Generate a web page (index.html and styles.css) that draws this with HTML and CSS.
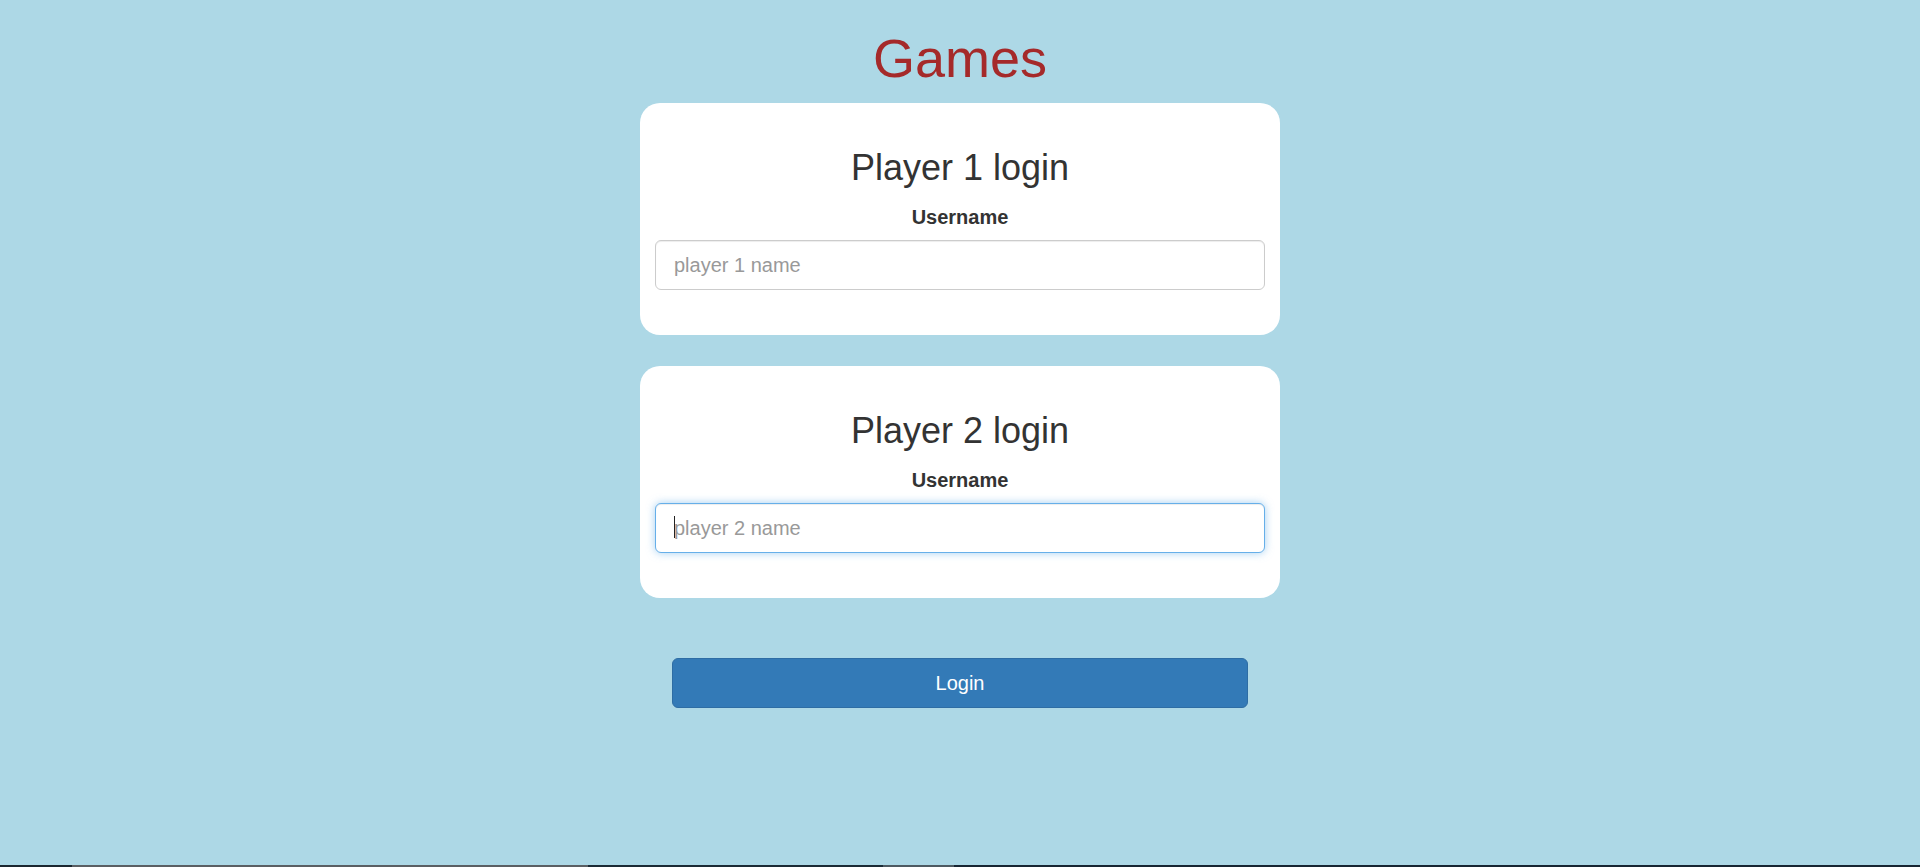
FILE: index.html
```html
<!DOCTYPE html>
<html lang="en">
<head>
<meta charset="utf-8">
<title>Games</title>
<link rel="stylesheet" href="styles.css">
</head>
<body>
<main class="page">
  <h1 class="title">Games</h1>
  <form class="login-form" onsubmit="return false;">
    <section class="card">
      <h2 class="card-heading">Player 1 login</h2>
      <label class="field-label" for="p1">Username</label>
      <div class="field">
        <input class="text-input" id="p1" type="text" placeholder="player 1 name">
      </div>
    </section>
    <section class="card card-second">
      <h2 class="card-heading">Player 2 login</h2>
      <label class="field-label" for="p2">Username</label>
      <div class="field field-focused">
        <input class="text-input text-input-focused" id="p2" type="text" placeholder="player 2 name">
      </div>
    </section>
    <button class="login-button" type="submit">Login</button>
  </form>
</main>
<div class="taskbar-strip"></div>
</body>
</html>
```

FILE: styles.css
```css
html, body {
  margin: 0;
  padding: 0;
  background: #add8e6;
}

body {
  min-height: 100vh;
  font-family: "Liberation Sans", Arial, Helvetica, sans-serif;
  color: #333333;
}

.page {
  display: flex;
  flex-direction: column;
  align-items: center;
  padding-top: 28px;
}

.title {
  margin: 0 0 15px 0;
  font-size: 54px;
  line-height: 60px;
  font-weight: 400;
  color: #a52a2a;
}

.login-form {
  width: 640px;
  display: flex;
  flex-direction: column;
  align-items: center;
}

.card {
  box-sizing: border-box;
  width: 640px;
  background: #ffffff;
  border-radius: 20px;
  padding: 45px 15px 45px 15px;
  display: flex;
  flex-direction: column;
  align-items: center;
}

.card-second {
  margin-top: 31px;
}

.card-heading {
  margin: 0 0 15px 0;
  font-size: 36px;
  line-height: 40px;
  font-weight: 400;
  color: #333333;
}

.field-label {
  display: block;
  margin: 0 0 9px 0;
  font-size: 20px;
  line-height: 28px;
  font-weight: 700;
  color: #333333;
}

.field {
  position: relative;
  width: 100%;
}

.text-input {
  box-sizing: border-box;
  display: block;
  width: 100%;
  height: 50px;
  margin: 0;
  padding: 0 18px;
  font-family: "Liberation Sans", Arial, Helvetica, sans-serif;
  font-size: 20px;
  color: #555555;
  background: #ffffff;
  border: 1px solid #cccccc;
  border-radius: 6px;
  box-shadow: inset 0 1px 1px rgba(0, 0, 0, 0.075);
  outline: none;
}

.text-input::placeholder {
  color: #999999;
  opacity: 1;
}

.text-input-focused {
  border-color: #66afe9;
  box-shadow: inset 0 1px 1px rgba(0, 0, 0, 0.075), 0 0 8px rgba(102, 175, 233, 0.6);
}

.field-focused::after {
  content: "";
  position: absolute;
  left: 19px;
  top: 13px;
  width: 1px;
  height: 22px;
  background: #222222;
}

.login-button {
  box-sizing: border-box;
  margin-top: 60px;
  width: 576px;
  height: 50px;
  font-family: "Liberation Sans", Arial, Helvetica, sans-serif;
  font-size: 20px;
  color: #ffffff;
  background: #337ab7;
  border: 1px solid #2e6da4;
  border-radius: 6px;
  cursor: pointer;
}

.taskbar-strip {
  position: fixed;
  left: 0;
  right: 0;
  bottom: 0;
  height: 2px;
  background: linear-gradient(to right,
    #1b2730 0, #1b2730 72px,
    #5a5f63 72px, #5a5f63 588px,
    #1b2b36 588px, #1b2b36 883px,
    #4d5a62 883px, #4d5a62 954px,
    #172633 954px, #172633 100%);
}
```
